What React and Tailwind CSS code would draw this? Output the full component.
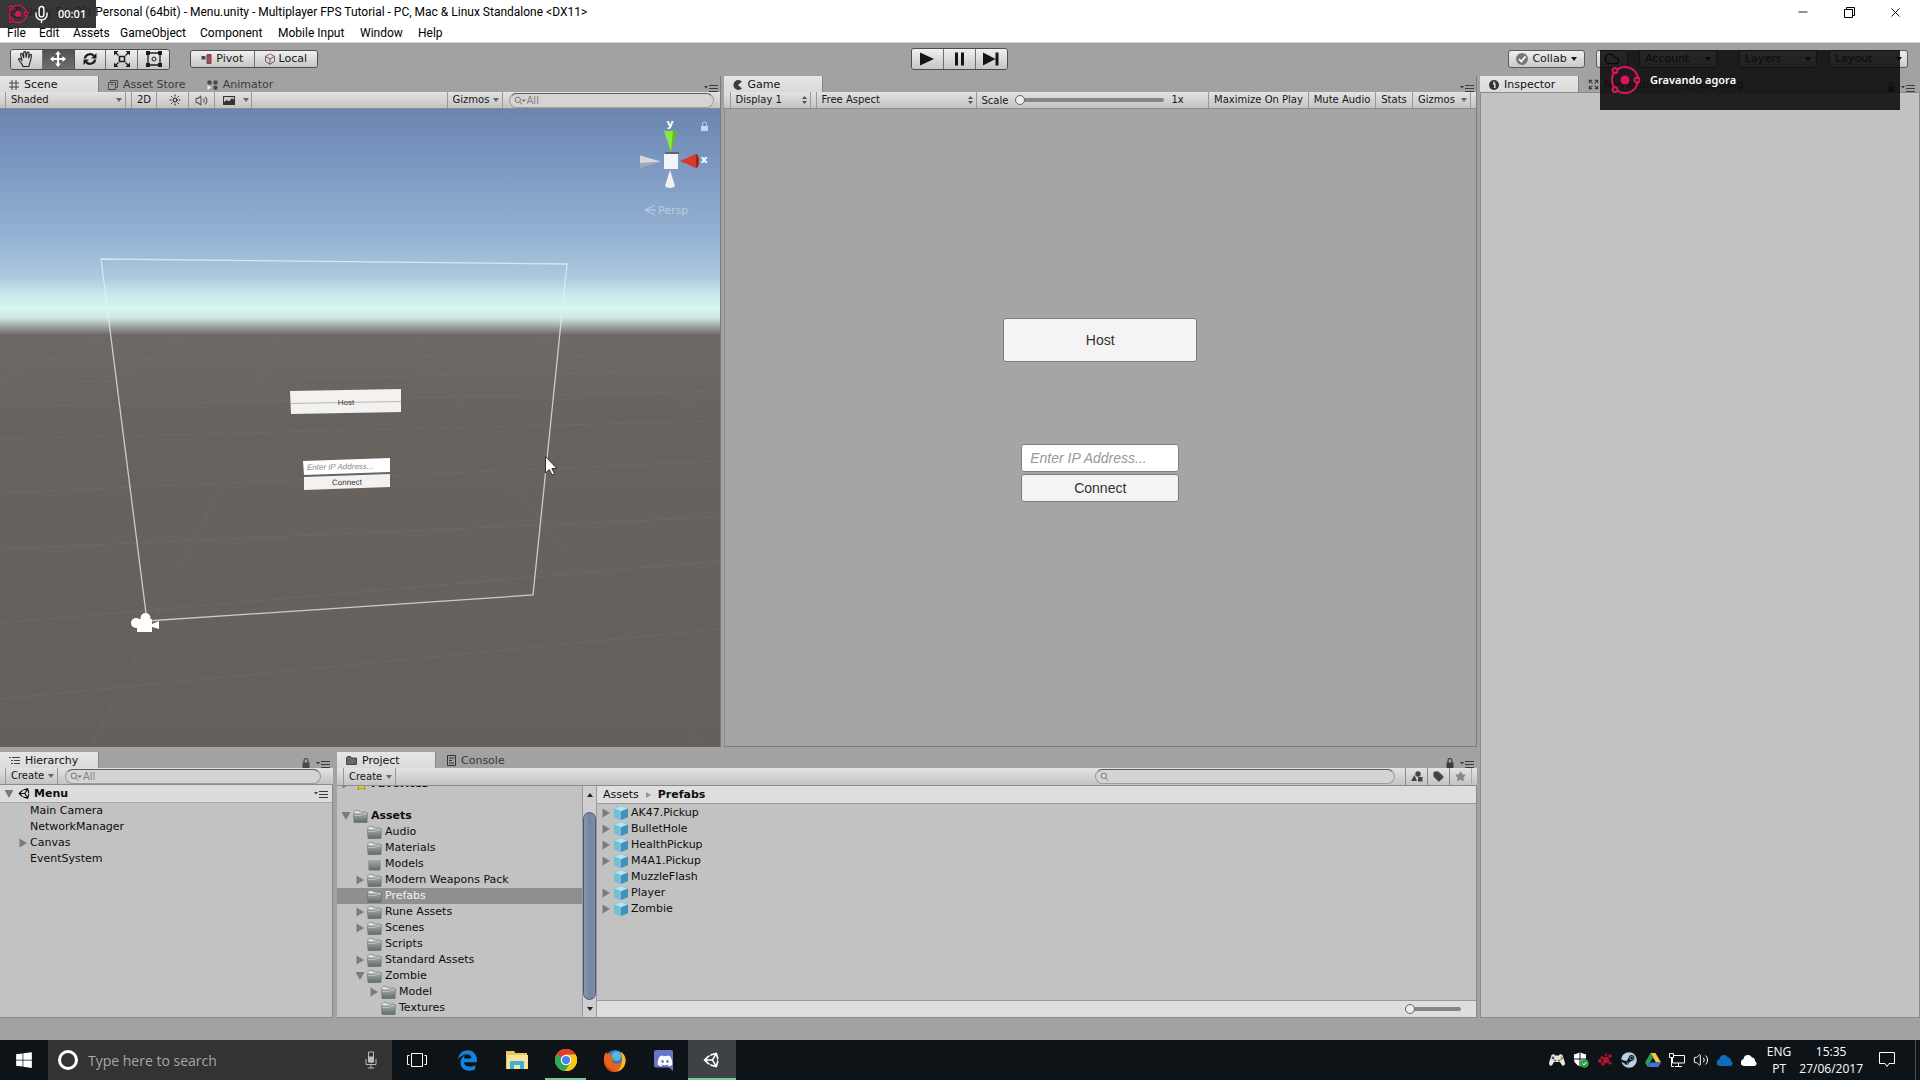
import { useState } from 'react';
import { Mic, Sun, Volume2, Minus, X, Expand, Copy, Tag, Star, Box, Cloud } from 'lucide-react';
import { FaDiscord, FaSteam, FaUnity, FaWindows } from 'react-icons/fa';
import { FaEdgeLegacy } from 'react-icons/fa6';

const MENUS = [
  ['File', 'w-8'],
  ['Edit', 'w-[34px]'],
  ['Assets', 'w-[47px]'],
  ['GameObject', 'w-20'],
  ['Component', 'w-[78px]'],
  ['Mobile Input', 'w-[82px]'],
  ['Window', 'w-[58px]'],
  ['Help', 'w-8'],
];

const SCENE_OBJECTS = [
  { name: 'Main Camera' },
  { name: 'NetworkManager' },
  { name: 'Canvas', fold: true },
  { name: 'EventSystem' },
];

const FOLDERS = [
  { name: 'Audio', depth: 1 },
  { name: 'Materials', depth: 1 },
  { name: 'Models', depth: 1, empty: true },
  { name: 'Modern Weapons Pack', depth: 1, fold: 'closed' },
  { name: 'Prefabs', depth: 1 },
  { name: 'Rune Assets', depth: 1, fold: 'closed' },
  { name: 'Scenes', depth: 1, fold: 'closed' },
  { name: 'Scripts', depth: 1 },
  { name: 'Standard Assets', depth: 1, fold: 'closed' },
  { name: 'Zombie', depth: 1, fold: 'open' },
  { name: 'Model', depth: 2, fold: 'closed' },
  { name: 'Textures', depth: 2 },
];

const PREFABS = [
  { name: 'AK47.Pickup', fold: true },
  { name: 'BulletHole', fold: true },
  { name: 'HealthPickup', fold: true },
  { name: 'M4A1.Pickup', fold: true },
  { name: 'MuzzleFlash' },
  { name: 'Player', fold: true },
  { name: 'Zombie', fold: true },
];

/* ---------- small glyphs ---------- */

function Arrow({ className = '' }) {
  return (
    <svg viewBox="0 0 6 4" className={`h-1 w-1.5 shrink-0 ${className}`} aria-hidden="true">
      <path d="M0 0h6L3 4z" fill="currentColor" />
    </svg>
  );
}

function UpDown({ className = '' }) {
  return (
    <svg viewBox="0 0 5 8" className={`h-2 w-[5px] shrink-0 ${className}`} aria-hidden="true">
      <path d="M0 3h5L2.500 0zM0 5h5L2.500 8z" fill="currentColor" />
    </svg>
  );
}

function Fold({ open, label }) {
  return (
    <button aria-label={`Toggle ${label}`} className="flex h-4 w-3.5 shrink-0 items-center justify-center text-[#7b7b7b]">
      <svg viewBox="0 0 10 10" className="size-2.5">
        {open ? <path d="M0.500 1h9L5 9z" fill="currentColor" /> : <path d="M1.500 0.500v9L9 5z" fill="currentColor" />}
      </svg>
    </button>
  );
}

function PaneMenu() {
  return (
    <button aria-label="Pane options" className="text-[#3c3c3c]">
      <svg viewBox="0 0 14 8" className="h-2 w-3.5">
        <path d="M0 2h4L2 4.500z" fill="currentColor" />
        <path d="M5 1.500h9M5 4.500h9M5 7.500h9" stroke="currentColor" strokeWidth="1" />
      </svg>
    </button>
  );
}

function Lock({ className = '' }) {
  return (
    <svg viewBox="0 0 8 10" className={`h-2.5 w-2 ${className}`} aria-hidden="true">
      <path d="M0.500 4.500h7V10h-7z" fill="currentColor" />
      <path d="M2 5V2.500a2 2 0 0 1 4 0V5" fill="none" stroke="currentColor" strokeWidth="1.200" />
    </svg>
  );
}

function FolderIcon({ empty }) {
  return (
    <svg viewBox="0 0 15 13" className="h-[13px] w-[15px] shrink-0" aria-hidden="true">
      <defs>
        <linearGradient id="folder" x1="0" y1="0" x2="0" y2="1">
          <stop offset="0" stopColor="#a6adad" />
          <stop offset="1" stopColor="#5f6a6b" />
        </linearGradient>
      </defs>
      {!empty && <path d="M1 3V1.500L2 0.500h4l1 1.500h6V4H1z" fill="#dde0e0" stroke="#747d7d" strokeWidth="0.700" />}
      {empty ? (
        <path d="M1 2h13l-.5 9.500-1 1h-10l-1-1z" fill="url(#folder)" />
      ) : (
        <>
          <path d="M0.500 4.500h8L10 3h4.500l-.5 9.500H1z" fill="url(#folder)" stroke="#6a7474" strokeWidth="0.700" />
          <path d="M1 5.200h7.800l1.500-1.500H14" fill="none" stroke="#dfe3e3" strokeWidth="0.700" />
        </>
      )}
    </svg>
  );
}

function PrefabIcon() {
  return (
    <svg viewBox="0 0 14 14" className="size-3.5 shrink-0" aria-hidden="true">
      <path d="M7 0l7 2.500v8.500l-7 3-7-3V2.500z" fill="#4f9dbd" />
      <path d="M7 0l7 2.500-7 3-7-3z" fill="#b3e2f1" />
      <path d="M0 2.500l7 3V14l-7-3z" fill="#74c0db" />
      <path d="M7 5.500l7-3V11l-7 3z" fill="#4391b6" />
    </svg>
  );
}

/* ---------- shared pane pieces ---------- */

function Tab({ active, icon, children }) {
  return (
    <button
      role="tab"
      aria-selected={!!active}
      className={`flex h-4 items-center gap-[5px] whitespace-nowrap pl-[9px] pr-3 pt-px text-[11px] leading-[15px] ${
        active ? 'w-[99px] border-r border-[#868686] bg-linear-to-b from-[#e6e6e6] to-[#dadada] text-[#111]' : 'text-[#3a3a3a]'
      }`}
    >
      {icon}
      {children}
    </button>
  );
}

function ToolRow({ children, className = 'h-[17px] pl-[5px]' }) {
  return (
    <div
      className={`flex shrink-0 items-stretch border-b border-[#8c8c8c] bg-linear-to-b from-[#e3e3e3] to-[#c3c3c3] text-[10px] text-[#161616] ${className}`}
    >
      {children}
    </div>
  );
}

function ToolSelect({ label, value, className = '', updown }) {
  return (
    <div className={`relative flex items-center border-x border-[#999] ${className}`}>
      <select aria-label={label} className="h-full w-full appearance-none bg-transparent pl-[5px] text-[10px] leading-4 outline-none">
        <option>{value}</option>
      </select>
      {updown ? (
        <UpDown className="pointer-events-none absolute right-[3px] text-[#555]" />
      ) : (
        <Arrow className="pointer-events-none absolute right-[3px] text-[#666]" />
      )}
    </div>
  );
}

function SearchBox({ label, placeholder, filter, className = '' }) {
  return (
    <label
      className={`flex h-[15px] items-center self-center rounded-full border border-[#9c9c9c] border-t-[#5c5c5c] bg-[#d4d4d4] pl-1 ${className}`}
    >
      <svg viewBox="0 0 12 9" className="h-[9px] w-3 shrink-0 text-[#777]" aria-hidden="true">
        <circle cx="3.800" cy="3.800" r="2.700" fill="none" stroke="currentColor" />
        <path d="M5.800 5.800L8 8.500" stroke="currentColor" />
        {filter && <path d="M7.500 3.500H12L9.700 6z" fill="currentColor" />}
      </svg>
      <input
        type="text"
        aria-label={label}
        placeholder={placeholder}
        className="h-full w-full bg-transparent pl-px text-[10px] text-[#333] outline-none placeholder:text-[#808080]"
      />
    </label>
  );
}

const groupButton =
  'flex items-center justify-center border-r border-[#6e6e6e] last:border-r-0 bg-linear-to-b from-[#f0f0f0] to-[#c6c6c6]';
const group = 'flex overflow-hidden rounded-[3px] border border-[#4e4e4e]';

/* ---------- window chrome ---------- */

function TitleBar() {
  return (
    <header className="relative h-[43px] shrink-0 border-b border-[#d8d8d8] bg-white font-[Roboto,'Noto_Sans',sans-serif] text-xs text-black">
      <div className="flex h-6 items-center justify-between">
        <h1 className="flex items-center gap-0.5 pl-[7px] font-normal">
          <FaUnity className="size-4" />
          Unity 5.6.2f1 Personal (64bit) - Menu.unity - Multiplayer FPS Tutorial - PC, Mac &amp; Linux Standalone &lt;DX11&gt;
        </h1>
        <div className="flex h-full items-center pr-0.5">
          <button aria-label="Minimize" className="flex w-[46px] justify-center">
            <Minus size={14} strokeWidth={1.5} />
          </button>
          <button aria-label="Restore" className="flex w-[46px] justify-center">
            <svg viewBox="0 0 11 11" className="size-[11px]" fill="none" stroke="currentColor">
              <path d="M0.500 2.500h8v8h-8zM2.500 2.500v-2h8v8h-2" />
            </svg>
          </button>
          <button aria-label="Close" className="flex w-[46px] justify-center">
            <X size={15} strokeWidth={1.5} />
          </button>
        </div>
      </div>
      <nav className="flex h-[18px] items-center pl-[7px]">
        {MENUS.map(([name, width]) => (
          <button key={name} className={`whitespace-nowrap text-left ${width}`}>
            {name}
          </button>
        ))}
      </nav>

      {/* Recorder badge */}
      <div className="absolute left-0 top-0 flex h-7 w-24 items-center bg-[#262626]/92 pl-2 text-white">
        <RecorderLogo className="size-5" />
        <Mic size={19} strokeWidth={1.8} className="ml-1" />
        <span className="ml-[7px] font-['Open_Sans',sans-serif] text-[11px] font-semibold">00:01</span>
      </div>
    </header>
  );
}

function RecorderLogo({ className }) {
  return (
    <svg viewBox="0 0 30 30" className={className} fill="none" stroke="#e0115f" strokeWidth="2" aria-hidden="true">
      <circle cx="15" cy="15" r="13" />
      <circle cx="15" cy="15" r="4.500" fill="#e0115f" stroke="none" />
      <circle cx="27" cy="15" r="2.500" fill="#222" />
      <circle cx="5" cy="5.500" r="2.500" fill="#222" />
      <circle cx="5" cy="24.500" r="2.500" fill="#222" />
    </svg>
  );
}

function HandIcon() {
  return (
    <svg viewBox="0 0 18 18" className="size-[18px]" fill="none" stroke="#222" strokeWidth="1.100" strokeLinejoin="round">
      <path d="M6 16.500C5 13 1.800 10.800 1.500 9.500c0-1.300 1.700-1.200 2.500 0l1 1.200L3.600 4.600c-.2-1.300 1.300-1.700 1.800-.4l1.300 3.500V2.600c.1-1.300 1.900-1.300 2 0l.4 4.700 1-4.500c.4-1.200 2-.8 1.900.5l-.5 4.700 1.400-3c.6-1.100 1.900-.5 1.700.7l-1.400 6.200c-.4 1.700-1.200 2.600-1.300 4.600z" />
    </svg>
  );
}

function MoveIcon() {
  return (
    <svg viewBox="0 0 16 16" className="size-4" fill="#fff">
      <path d="M8 0l3 3.500H9V7h3.500V5L16 8l-3.500 3V9H9v3.500h2L8 16l-3-3.500h2V9H3.500v2L0 8l3.500-3v2H7V3.500H5z" />
    </svg>
  );
}

function RotateIcon() {
  return (
    <svg viewBox="0 0 16 16" className="size-4" fill="none" stroke="#1c1c1c" strokeWidth="2.200">
      <path d="M3 7.500C3 3.500 9 1.500 12 5M13 8.500c0 4-6 6-9 2.500" />
      <path d="M14.500 2v5.500h-5.500zM1.500 14V8.500H7z" fill="#1c1c1c" stroke="none" />
    </svg>
  );
}

function ScaleIcon() {
  return (
    <svg viewBox="0 0 16 16" className="size-4" fill="none" stroke="#1c1c1c" strokeWidth="1.300">
      <path d="M5.500 5.500h5v5h-5z" strokeWidth="1.600" />
      <path d="M4.500 4.500l-3-3M11.500 4.500l3-3M4.500 11.500l-3 3M11.500 11.500l3 3" />
      <path d="M0 0h4.500L0 4.500zM16 0h-4.500L16 4.500zM0 16h4.500L0 11.500zM16 16h-4.500l4.500-4.500z" fill="#1c1c1c" stroke="none" />
    </svg>
  );
}

function RectIcon() {
  return (
    <svg viewBox="0 0 16 16" className="size-4" fill="none" stroke="#1c1c1c">
      <path d="M2 2h12v12H2z" strokeWidth="1.300" />
      <path d="M0 0h4v4H0zM12 0h4v4h-4zM0 12h4v4H0zM12 12h4v4h-4z" fill="#1c1c1c" stroke="none" />
      <circle cx="8" cy="8" r="2" />
    </svg>
  );
}

function MainToolbar() {
  const [tool, setTool] = useState('Move');
  const tools = [
    ['Hand', <HandIcon />],
    ['Move', <MoveIcon />],
    ['Rotate', <RotateIcon />],
    ['Scale', <ScaleIcon />],
    ['Rect', <RectIcon />],
  ];
  const corner = 'flex h-[18px] items-center gap-1 rounded-[3px] border border-[#5a5a5a] bg-linear-to-b from-[#f0f0f0] to-[#c9c9c9]';

  return (
    <div className="grid h-[33px] shrink-0 grid-cols-[1fr_auto_1fr] items-center pb-px pl-2.5 pr-3 text-[11px] text-[#161616]">
      <div className="flex items-center">
        <div className={`h-[21px] w-40 ${group}`}>
          {tools.map(([name, icon]) => (
            <button
              key={name}
              aria-label={`${name} tool`}
              onClick={() => setTool(name)}
              className={
                tool === name
                  ? 'flex flex-1 items-center justify-center border-r border-[#4e4e4e] bg-linear-to-b from-[#525252] to-[#6e6e6e]'
                  : `flex-1 ${groupButton}`
              }
            >
              {icon}
            </button>
          ))}
        </div>
        <div className={`ml-5 h-[18px] w-32 ${group}`}>
          <button className={`flex-1 gap-1 ${groupButton}`}>
            <svg viewBox="0 0 11 10" className="h-2.5 w-[11px]" aria-hidden="true">
              <path d="M0.500 2h4v3.500h-4z" fill="#4b4b4b" />
              <path d="M6 0.500h4v9H6z" fill="#b14955" stroke="#6b4a4e" />
            </svg>
            Pivot
          </button>
          <button className={`flex-1 gap-0.5 ${groupButton}`}>
            <Box size={12} strokeWidth={1.8} className="text-[#6b4a4e]" />
            Local
          </button>
        </div>
      </div>

      <div className={`h-[22px] w-[97px] ${group}`}>
        <button aria-label="Play" className={`flex-1 ${groupButton}`}>
          <svg viewBox="0 0 14 14" className="size-3.5"><path d="M0 0.500v13L14 7z" fill="#151515" /></svg>
        </button>
        <button aria-label="Pause" className={`flex-1 ${groupButton}`}>
          <svg viewBox="0 0 14 14" className="size-3.5"><path d="M3 0.500h3v13H3zM9 0.500h3v13H9z" fill="#151515" /></svg>
        </button>
        <button aria-label="Step" className={`flex-1 ${groupButton}`}>
          <svg viewBox="0 0 16 14" className="h-3.5 w-4"><path d="M0 0.500v13L12.500 7zM12.500 0.500h3v13h-3z" fill="#151515" /></svg>
        </button>
      </div>

      <div className="flex items-center justify-end">
        <button className={`w-[77px] justify-center ${corner}`}>
          <svg viewBox="0 0 12 12" className="size-3" aria-hidden="true">
            <circle cx="6" cy="6" r="6" fill="#777" />
            <path d="M3 6l2.300 2.500L9.500 3.500" fill="none" stroke="#fff" strokeWidth="1.800" />
          </svg>
          Collab
          <Arrow />
        </button>
        <button aria-label="Services" className={`ml-[11px] w-8 justify-center ${corner}`}>
          <Cloud size={16} />
        </button>
        <button className={`ml-[11px] w-[78px] justify-between px-[5px] ${corner}`}>
          Account <Arrow />
        </button>
        <button className={`ml-[22px] w-[78px] justify-between px-[5px] ${corner}`}>
          Layers <Arrow />
        </button>
        <button className={`ml-3 w-[79px] justify-between px-[5px] ${corner}`}>
          Layout <Arrow />
        </button>
      </div>
    </div>
  );
}

/* ---------- scene ---------- */

function SceneView() {
  return (
    <div className="relative flex-1 overflow-hidden bg-[#67625e]">
      <svg viewBox="0 0 720 638" preserveAspectRatio="xMinYMin slice" className="absolute inset-0 h-full w-full">
        <defs>
          <linearGradient id="sky" x1="0" y1="0" x2="0" y2="1">
            <stop offset="0" stopColor="#6b85ae" />
            <stop offset="0.190" stopColor="#7893be" />
            <stop offset="0.560" stopColor="#94b1d2" />
            <stop offset="0.740" stopColor="#abc8dd" />
            <stop offset="0.830" stopColor="#cbebeb" />
            <stop offset="0.880" stopColor="#d7f7f5" />
            <stop offset="0.925" stopColor="#cde6e2" />
            <stop offset="0.965" stopColor="#99a19e" />
            <stop offset="1" stopColor="#6d6967" />
          </linearGradient>
          <linearGradient id="ground" x1="0" y1="0" x2="0" y2="1">
            <stop offset="0" stopColor="#6d6967" />
            <stop offset="0.200" stopColor="#68635f" />
            <stop offset="1" stopColor="#65605c" />
          </linearGradient>
        </defs>
        <rect width="720" height="226" fill="url(#sky)" />
        <rect y="225" width="720" height="414" fill="url(#ground)" />

        {/* Floor grid */}
        <g stroke="#8a8681" strokeOpacity="0.220" fill="none">
          <path d="M0 250L720 246M0 274L720 262M0 298L720 282M0 330L720 312M0 384L720 352M0 440L720 408M0 514L720 452M0 590L720 520" />
          <path d="M275 230L237 345L150 520L90 639M420 230L490 345L640 540L700 639M540 230L720 310M180 230L0 340M100 230L0 270" />
        </g>

        {/* Canvas bounds */}
        <path d="M101 150L567 155L533 486L147 512z" fill="none" stroke="#e9f1ee" strokeOpacity="0.750" strokeWidth="1.300" />

        <path d="M290 282L401 280L401 303L291 305z" fill="#f3f2f1" />
        <path d="M290 294.500L401 292.500" stroke="#a3aaaa" strokeWidth="0.800" />
        <path d="M303 352L390 349L390 363L304 366z" fill="#fff" />
        <path d="M304 368L390 365L390 378L304 381z" fill="#f3f2f1" />
        <g fontFamily="'Liberation Sans', sans-serif" fontSize="8" fill="#333">
          <text x="346" y="296" textAnchor="middle">Host</text>
          <text x="307" y="361" fill="#8b8b8b" fontStyle="italic" transform="rotate(-1 307 361)">Enter IP Address...</text>
          <text x="347" y="376" textAnchor="middle" transform="rotate(-1 347 376)">Connect</text>
        </g>

        {/* Camera gizmo */}
        <g fill="#fff">
          <circle cx="136" cy="514" r="5" />
          <circle cx="145.500" cy="509" r="5" />
          <path d="M137 510h15v5l7-3v8l-7-2v5h-15z" />
        </g>

        {/* Orientation gizmo */}
        <path d="M664 22h13l-6 21z" fill="#86ea3a" />
        <path d="M673 22h4l-6 21z" fill="#5fb824" />
        <path d="M640 46.500l21 6-21 6z" fill="#d5d9dd" />
        <path d="M640 54l21-1.500-21 6z" fill="#a2a8ae" />
        <path d="M670 61l5 16c-2 2.500-8 2.500-10 0z" fill="#eef1f4" />
        <path d="M680 52l16-7c4 1 4 13 0 14z" fill="#d9392b" />
        <path d="M696 45c4 1 4 13 0 14z" fill="#a3231a" />
        <path d="M664 45h14v15h-14z" fill="#f2f5f7" />
        <path d="M664 45l2-2h13v2z" fill="#5a6673" />
        <g fill="#fff" fontFamily="'DejaVu Sans', sans-serif" fontSize="11" fontWeight="bold">
          <text x="670" y="18" textAnchor="middle">y</text>
          <text x="704" y="54" textAnchor="middle">x</text>
        </g>
        <g fill="none" stroke="#dce6f2" strokeOpacity="0.650">
          <path d="M655 96l-10 5 10 5M645 101h11" />
        </g>
        <text x="658" y="105" fill="#dce6f2" fillOpacity="0.600" fontSize="11" fontFamily="'DejaVu Sans', sans-serif">Persp</text>
        <path d="M701 17h7v5h-7z" fill="#dce6f2" fillOpacity="0.800" />
        <path d="M702.500 17v-2a2 2 0 0 1 4 0v2" fill="none" stroke="#dce6f2" strokeOpacity="0.700" />

        {/* Pointer */}
        <path d="M545.500 347.500v16.500l3.800-3.500 2.700 5.500 2.500-1.200-2.600-5.300h5z" fill="#fff" stroke="#222" strokeWidth="0.900" />
      </svg>
    </div>
  );
}

function ScenePane() {
  return (
    <section className="flex min-w-0 flex-[720] flex-col border-r border-[#7c7c7c]">
      <div className="flex h-4 shrink-0 items-end justify-between">
        <div role="tablist" className="flex">
          <Tab
            active
            icon={
              <svg viewBox="0 0 10 10" className="size-2.5" stroke="#444" aria-hidden="true">
                <path d="M3 0v10M7 0v10M0 3h10M0 7h10" />
              </svg>
            }
          >
            Scene
          </Tab>
          <Tab
            icon={
              <svg viewBox="0 0 10 10" className="size-2.5" fill="none" stroke="#4a4a4a" aria-hidden="true">
                <path d="M0.500 2.500h7v7h-7zM2.500 2.500v-2h7v7h-2M2.500 4.500h3" />
              </svg>
            }
          >
            Asset Store
          </Tab>
          <Tab
            icon={
              <svg viewBox="0 0 11 10" className="h-2.5 w-[11px]" fill="#4a4a4a" aria-hidden="true">
                <circle cx="2.500" cy="2.500" r="2.200" />
                <circle cx="8.500" cy="2.500" r="2.200" />
                <circle cx="8.500" cy="7.800" r="2.200" />
                <path d="M0.500 5l4 2.500-4 2.500z" fill="#eee" />
              </svg>
            }
          >
            Animator
          </Tab>
        </div>
        <div className="flex pr-0.5">
          <PaneMenu />
        </div>
      </div>
      <ToolRow>
        <ToolSelect label="Draw mode" value="Shaded" className="w-[121px]" />
        <button className="ml-[5px] w-[26px] border-x border-[#999] leading-4">2D</button>
        <button aria-label="Lighting" className="flex w-8 items-center justify-center border-r border-[#999] pl-1">
          <Sun size={12} />
        </button>
        <button aria-label="Audio" className="flex w-[26px] items-center justify-center border-r border-[#999] text-[#555]">
          <Volume2 size={13} />
        </button>
        <button aria-label="Effects" className="flex w-[37px] items-center gap-2 border-r border-[#999] pl-2">
          <svg viewBox="0 0 12 9" className="h-[9px] w-3" aria-hidden="true">
            <path d="M0 0h12v9H0z" fill="#333" />
            <path d="M1 6l3-2 2 1.500L9 2l2 2V1H1z" fill="#ccc" />
          </svg>
          <Arrow className="text-[#666]" />
        </button>
        <div className="flex-1" />
        <ToolSelect label="Scene gizmos" value="Gizmos" className="w-14" />
        <SearchBox label="Search scene" placeholder="All" filter className="mx-1.5 w-[205px]" />
      </ToolRow>
      <SceneView />
    </section>
  );
}

/* ---------- game ---------- */

function GamePane() {
  const uiButton = 'rounded-[3px] border border-[#7e7e7e] bg-[#f4f4f4] text-sm text-[#323232]';
  return (
    <section className="flex min-w-0 flex-[753] flex-col border-b border-r border-[#7c7c7c]">
      <div className="flex h-4 shrink-0 items-end justify-between">
        <div role="tablist">
          <Tab
            active
            icon={
              <svg viewBox="0 0 10 10" className="size-2.5" aria-hidden="true">
                <path d="M9 1.500A5 5 0 1 0 9 8.500L5 5z" fill="#3c3c3c" />
              </svg>
            }
          >
            Game
          </Tab>
        </div>
        <div className="flex pr-0.5">
          <PaneMenu />
        </div>
      </div>
      <ToolRow className="h-[17px] pl-1.5">
        <ToolSelect label="Display" value="Display 1" updown className="w-[81px]" />
        <ToolSelect label="Aspect" value="Free Aspect" updown className="ml-[5px] w-[161px]" />
        <label className="flex items-center gap-[7px] pl-[5px]">
          Scale
          <Slider label="Scale" className="w-[149px]" />
        </label>
        <span className="ml-[7px] leading-4">1x</span>
        <div className="flex-1" />
        <button className="w-[100px] border-l border-[#999] leading-4">Maximize On Play</button>
        <button className="w-[67px] border-l border-[#999] leading-4">Mute Audio</button>
        <button className="w-[37px] border-l border-[#999] leading-4">Stats</button>
        <button className="flex w-[59px] items-center justify-between border-x border-[#999] pl-[5px] pr-[3px] leading-4">
          Gizmos
          <Arrow className="text-[#666]" />
        </button>
        <div className="w-[5px]" />
      </ToolRow>
      <div className="flex flex-1 flex-col items-center border-l border-[#8c8c8c] bg-[#a5a5a5] pt-[209px] font-['Liberation_Sans',Arial,sans-serif]">
        <button className={`h-11 w-[194px] ${uiButton}`}>Host</button>
        <div className="mt-[82px] flex w-[158px] flex-col gap-0.5">
          <input
            type="text"
            aria-label="IP address"
            placeholder="Enter IP Address..."
            className="h-7 rounded-[3px] border border-[#7e7e7e] bg-white px-2 text-sm placeholder:italic placeholder:text-[#989898]"
          />
          <button className={`h-7 ${uiButton}`}>Connect</button>
        </div>
      </div>
    </section>
  );
}

function Slider({ label, className = '' }) {
  return (
    <input
      type="range"
      aria-label={label}
      defaultValue="0"
      className={`h-3 appearance-none bg-transparent [&::-webkit-slider-runnable-track]:h-1 [&::-webkit-slider-runnable-track]:rounded-full [&::-webkit-slider-runnable-track]:bg-[#858585] [&::-webkit-slider-thumb]:-mt-[3px] [&::-webkit-slider-thumb]:size-2.5 [&::-webkit-slider-thumb]:appearance-none [&::-webkit-slider-thumb]:rounded-full [&::-webkit-slider-thumb]:border [&::-webkit-slider-thumb]:border-[#666] [&::-webkit-slider-thumb]:bg-[#ececec] ${className}`}
    />
  );
}

/* ---------- hierarchy + project ---------- */

function HierarchyPane() {
  return (
    <section className="flex w-[333px] shrink-0 flex-col">
      <div className="flex h-4 shrink-0 items-end justify-between">
        <div role="tablist">
          <Tab
            active
            icon={
              <svg viewBox="0 0 11 9" className="h-[9px] w-[11px]" stroke="#444" aria-hidden="true">
                <path d="M0 1.500h2M3 1.500h8M2 4.500h2M5 4.500h6M2 7.500h2M5 7.500h6" />
              </svg>
            }
          >
            Hierarchy
          </Tab>
        </div>
        <div className="flex items-end gap-1.5 pr-[3px]">
          <Lock className="text-[#4a4a4a]" />
          <PaneMenu />
        </div>
      </div>
      <ToolRow>
        <button className="flex w-[53px] items-center justify-between border-x border-[#999] pl-[5px] pr-[3px] leading-4">
          Create <Arrow className="text-[#666]" />
        </button>
        <SearchBox label="Search hierarchy" placeholder="All" filter className="ml-[7px] mr-3 flex-1" />
      </ToolRow>
      <div className="flex flex-1 flex-col border-b border-r border-[#8a8a8a] bg-[#c2c2c2] text-[11px] leading-4 text-[#0d0d0d]">
        <div className="flex h-[18px] items-center border-b border-[#a8a8a8] bg-[#dcdcdc] pl-0.5 pr-1">
          <Fold open label="Menu" />
          <FaUnity className="ml-0.5 size-[13px]" />
          <span className="ml-[3px] flex-1 font-bold">Menu</span>
          <PaneMenu />
        </div>
        <ul>
          {SCENE_OBJECTS.map((o) => (
            <li key={o.name} className="flex h-4 items-center pl-4">
              {o.fold ? <Fold label={o.name} /> : <span className="w-3.5" />}
              {o.name}
            </li>
          ))}
        </ul>
      </div>
    </section>
  );
}

function FolderTree({ selected, onSelect }) {
  return (
    <div className="flex w-[260px] shrink-0">
      <div className="h-full flex-1 overflow-hidden">
        {/* Scrolled a little past the top */}
        <div className="-mt-[10px]">
          <div className="flex h-4 items-center pl-0.5 font-bold">
            <Fold label="Favorites" />
            <Star size={13} className="ml-0.5 fill-[#e8d635] text-[#a8951d]" />
            <span className="ml-[3px]">Favorites</span>
          </div>
          <div className="mt-4 flex h-4 items-center pl-0.5 font-bold">
            <Fold open label="Assets" />
            <FolderIcon />
            <span className="ml-[3px]">Assets</span>
          </div>
          <ul>
            {FOLDERS.map((f) => (
              <li
                key={f.name}
                onClick={() => onSelect(f.name)}
                className={`flex h-4 items-center ${f.depth === 2 ? 'pl-[30px]' : 'pl-4'} ${
                  f.name === selected ? 'bg-[#8f8f8f] text-[#f2f2f2]' : ''
                }`}
              >
                {f.fold ? <Fold open={f.fold === 'open'} label={f.name} /> : <span className="w-3.5" />}
                <FolderIcon empty={f.empty} />
                <span className="ml-[3px] whitespace-nowrap">{f.name}</span>
              </li>
            ))}
          </ul>
        </div>
      </div>
      {/* Scrollbar */}
      <div className="flex w-[15px] flex-col items-center border-x border-[#9a9a9a] bg-[#cfcfcf] text-[#222]">
        <div className="flex h-[26px] items-start pt-[7px]">
          <Arrow className="rotate-180" />
        </div>
        <div className="w-full flex-1 rounded-full border border-[#4c5a6e] bg-linear-to-r from-[#8698b0] via-[#74869f] to-[#7d8ea5]" />
        <div className="flex h-[17px] items-center">
          <Arrow />
        </div>
      </div>
    </div>
  );
}

function ProjectPane() {
  const [folder, setFolder] = useState('Prefabs');
  const filterButton = 'flex w-[22px] items-center justify-center border-l border-[#8a8a8a]';

  return (
    <section className="flex min-w-0 flex-1 flex-col">
      <div className="flex h-4 shrink-0 items-end justify-between">
        <div role="tablist" className="flex">
          <Tab
            active
            icon={
              <svg viewBox="0 0 11 9" className="h-[9px] w-[11px]" aria-hidden="true">
                <path d="M0.500 1.500l1-1h3l1 1.500h5v6.500h-10z" fill="#686868" stroke="#333" strokeWidth="0.800" />
              </svg>
            }
          >
            Project
          </Tab>
          <Tab
            icon={
              <svg viewBox="0 0 9 11" className="ml-0.5 h-[11px] w-[9px]" fill="none" stroke="#333" aria-hidden="true">
                <path d="M0.500 0.500h8v10h-8zM2 3h5M2 5.500h3M2 8h5" />
              </svg>
            }
          >
            Console
          </Tab>
        </div>
        <div className="flex items-end gap-1.5 pr-[3px]">
          <Lock className="text-[#3c3c3c]" />
          <PaneMenu />
        </div>
      </div>
      <ToolRow className="h-[18px] pl-1.5">
        <button className="flex w-[53px] items-center justify-between border-x border-[#999] pl-[5px] pr-[3px] leading-4">
          Create <Arrow className="text-[#666]" />
        </button>
        <div className="flex-1" />
        <SearchBox label="Search project" className="mr-2.5 w-[300px]" />
        <button aria-label="Search by type" className={filterButton}>
          <svg viewBox="0 0 12 11" className="h-[11px] w-3" fill="#444">
            <circle cx="7" cy="3" r="2.700" />
            <path d="M7 6h4.500v4.500H7zM0 10l3.500-6L6 10z" />
          </svg>
        </button>
        <button aria-label="Search by label" className={filterButton}>
          <Tag size={11} fill="#444" className="text-[#444]" />
        </button>
        <button aria-label="Save search" className={filterButton}>
          <Star size={11} fill="#888" className="text-[#888]" />
        </button>
        <div className="w-1.5 border-l border-[#aaa]" />
      </ToolRow>
      <div className="flex min-h-0 flex-1 border-b border-r border-[#8a8a8a] bg-[#c2c2c2] text-[11px] leading-4 text-[#0d0d0d]">
        <FolderTree selected={folder} onSelect={setFolder} />
        <div className="flex flex-1 flex-col">
          <div className="flex h-[18px] items-center gap-[7px] border-b border-[#989898] bg-[#dedede] pl-1.5">
            <span>Assets</span>
            <svg viewBox="0 0 5 6" className="h-1.5 w-[5px]" aria-hidden="true"><path d="M0 0v6l5-3z" fill="#999" /></svg>
            <span className="font-bold">{folder}</span>
          </div>
          <ul className="flex-1 pt-px">
            {PREFABS.map((p) => (
              <li key={p.name} className="flex h-4 items-center pl-0.5">
                {p.fold ? <Fold label={p.name} /> : <span className="w-3.5" />}
                <span className="ml-px"><PrefabIcon /></span>
                <span className="ml-[3px]">{p.name}</span>
              </li>
            ))}
          </ul>
          <div className="flex h-[17px] items-center justify-end border-t border-[#989898] bg-[#dedede] pr-[15px]">
            <Slider label="Icon size" className="w-14" />
          </div>
        </div>
      </div>
    </section>
  );
}

/* ---------- inspector ---------- */

function InspectorPane() {
  return (
    <section className="flex w-[440px] shrink-0 flex-col">
      <div className="flex h-4 shrink-0 items-end justify-between">
        <div role="tablist" className="flex">
          <Tab
            active
            icon={
              <svg viewBox="0 0 10 10" className="size-2.5" aria-hidden="true">
                <circle cx="5" cy="5" r="5" fill="#333" />
                <path d="M4 4h1.800v4M5 1.500v1.500" stroke="#eee" strokeWidth="1.400" />
              </svg>
            }
          >
            Inspector
          </Tab>
          <Tab icon={<Expand size={11} strokeWidth={2.500} />}>Navigation</Tab>
          <Tab icon={<Copy size={10} />}>Lighting</Tab>
        </div>
        <div className="flex items-end gap-1.5 pr-[5px]">
          <Lock className="text-[#4a4a4a]" />
          <PaneMenu />
        </div>
      </div>
      <div className="flex-1 border border-[#8a8a8a] bg-[#c2c2c2]" />
    </section>
  );
}

/* ---------- taskbar ---------- */

function ChromeIcon() {
  return (
    <svg viewBox="0 0 24 24" className="size-[22px]">
      <circle cx="12" cy="12" r="12" fill="#fbc716" />
      <path d="M12 12L1.600 6a12 12 0 0 1 20.800 0z" fill="#e33b2e" />
      <path d="M12 12L1.600 6A12 12 0 0 0 11 24l6.500-9z" fill="#2da94f" />
      <path d="M12 6h10.400A12 12 0 0 1 11 24l6-9z" fill="#fbc716" />
      <circle cx="12" cy="12" r="5.700" fill="#fff" />
      <circle cx="12" cy="12" r="4.500" fill="#4284f3" />
    </svg>
  );
}

function FirefoxIcon() {
  return (
    <svg viewBox="0 0 24 24" className="size-[23px]">
      <circle cx="12.500" cy="11" r="10" fill="#2a7fc4" />
      <circle cx="14" cy="7.500" r="5" fill="#5ab4e0" />
      <path d="M1 9c0-3 1.500-5 2.500-6 .3 1.200 1 2 1.700 2.500C7 4.800 9 5 10 5.600 8 6.500 8 8 9 9c1.500.6 3 .4 3.500 1-.3 1.500-2.500 1.500-2.500 3 0 2 4 3.500 7.500 1.500 3-2 3-7 1-11.500C22 5 24 9 23.500 13 23 19.500 18 24 12 24 5 24 .5 18 1 9z" fill="#e8641b" />
      <path d="M18.500 3C22 5 24 9 23.500 13c-.4 5-4 9.500-9 10.500 5-3.500 7-12 4-20.500z" fill="#f9b92c" />
      <path d="M1 11c1 6 5 11 12 11-7 3-13-4-12-11z" fill="#c93a20" />
    </svg>
  );
}

function FolderTaskIcon() {
  return (
    <svg viewBox="0 0 22 20" className="h-5 w-[22px]">
      <path d="M0 1h8l1.500 2H21v16H0z" fill="#e9c65a" />
      <path d="M1 5h21v14H1z" fill="#f8e39b" />
      <path d="M4 19v-6.500c0-1 .7-1.500 1.500-1.500h11c.8 0 1.500.5 1.500 1.500V19h-4v-4H8v4z" fill="#3fb0dd" />
    </svg>
  );
}

function Taskbar() {
  const app = 'flex w-[49px] items-center justify-center';
  return (
    <footer className="flex h-10 shrink-0 items-stretch bg-[#0e1317] font-['Open_Sans','Noto_Sans',sans-serif] text-white">
      <button aria-label="Start" className="flex w-12 items-center justify-center">
        <FaWindows className="size-[18px]" />
      </button>
      <label className="flex w-[344px] items-center bg-[#333] pl-2.5 pr-3.5">
        <span className="size-5 shrink-0 rounded-full border-[3px] border-white" />
        <input
          type="text"
          aria-label="Search"
          placeholder="Type here to search"
          className="h-full flex-1 bg-transparent pl-2.5 text-sm outline-none placeholder:text-[#a6a6a6]"
        />
        <svg viewBox="0 0 14 18" className="h-[18px] w-3.5" fill="none" stroke="#bbb" aria-hidden="true">
          <path d="M4.500 1h5v10h-5zM2 8v5.500h10V8M7 14v3M4 17h6" />
          <path d="M5 6h4v5H5z" fill="#bbb" />
        </svg>
      </label>
      <button aria-label="Task view" className={app}>
        <svg viewBox="0 0 20 14" className="h-3.5 w-5" fill="none" stroke="currentColor">
          <path d="M4.500 0.500h11v13h-11zM2.500 2.500h-2v9h2M17.500 2.500h2v9h-2" />
        </svg>
      </button>
      <div className="ml-0.5 flex">
        <button aria-label="Edge" className={app}>
          <FaEdgeLegacy className="size-[21px] text-[#1583dc]" />
        </button>
        <button aria-label="File Explorer" className={app}>
          <FolderTaskIcon />
        </button>
        <button aria-label="Chrome" className="mx-1 flex w-[41px] items-center justify-center border-b-2 border-t-2 border-b-[#7ac59a] border-t-transparent">
          <ChromeIcon />
        </button>
        <button aria-label="Firefox" className={app}>
          <FirefoxIcon />
        </button>
        <button aria-label="Discord" className={app}>
          <svg viewBox="0 0 19 21" className="h-[21px] w-[19px]">
            <path d="M2 0h15a2 2 0 0 1 2 2v19l-4-3.500H2a2 2 0 0 1-2-2V2a2 2 0 0 1 2-2z" fill="#6478c4" />
            <FaDiscord x="3" y="3" width="13" height="12" color="#fff" />
          </svg>
        </button>
        <button aria-label="Unity" className="flex w-12 items-center justify-center border-b-2 border-t-2 border-b-[#7ac59a] border-t-[#3c4245] bg-[#3c4245]">
          <FaUnity className="size-[18px]" />
        </button>
      </div>

      <div className="flex-1" />

      <div className="flex items-center gap-2">
        <svg viewBox="0 0 16 12" className="h-3 w-4" aria-hidden="true">
          <path d="M2.500 1L5 0l1 1.500h4L11 0l2.500 1L16 9c0 3-2.500 3.500-3.500 1.500L11 8H5l-1.500 2.500C2.500 12.500 0 12 0 9z" fill="#e6e6e6" />
          <circle cx="4" cy="4" r="1.400" fill="#555" />
          <circle cx="6.200" cy="6.500" r="1.100" fill="#666" />
          <circle cx="9.800" cy="6.500" r="1.100" fill="#666" />
          <circle cx="12" cy="2.800" r="0.900" fill="#e6b422" />
          <circle cx="13.300" cy="4.200" r="0.900" fill="#d0402c" />
          <circle cx="12" cy="5.400" r="0.900" fill="#3fae49" />
        </svg>
        <svg viewBox="0 0 16 16" className="size-4" aria-hidden="true">
          <path d="M7 0.500l6 2v5c0 3-3 5.500-6 7-3-1.500-6-4-6-7v-5z" fill="#fff" />
          <path d="M7 0.500v14M1 7h12" stroke="#0e1317" />
          <circle cx="11.500" cy="11.500" r="4.300" fill="#27a348" />
          <path d="M9.500 11.500l1.500 1.500 2.500-3" fill="none" stroke="#fff" />
        </svg>
        <svg viewBox="0 0 16 16" className="size-4" fill="#b5122d" aria-hidden="true">
          <circle cx="9" cy="8" r="3.200" />
          <circle cx="3" cy="9" r="2" />
          <circle cx="6" cy="12" r="1.800" />
          <circle cx="13" cy="4" r="1.800" />
          <circle cx="5" cy="5.500" r="1.500" />
          <circle cx="13" cy="11" r="1.600" />
          <circle cx="9" cy="2.800" r="1.200" />
        </svg>
        <FaSteam className="size-4 text-[#b9cfe2]" />
        <svg viewBox="0 0 16 14" className="h-3.5 w-4" aria-hidden="true">
          <path d="M5.500 0h5L16 9.500h-5z" fill="#f6c945" />
          <path d="M5.500 0L8 4.500 2.700 14 0 9.500z" fill="#2a9c55" />
          <path d="M5.500 9.500H16L13.300 14H2.700z" fill="#3f74e0" />
        </svg>
        <svg viewBox="0 0 16 14" className="h-3.5 w-4" fill="none" stroke="#fff" aria-hidden="true">
          <path d="M5 2.500h10.500v7.500H3.500V5M9.500 10v3M6 13.500h7M0.500 0.500h4v4h-4zM2.500 5v8.500H5" />
        </svg>
        <Volume2 size={16} strokeWidth={1.5} />
        <svg viewBox="0 0 16 11" className="h-[11px] w-4" fill="#0f6cbf" aria-hidden="true">
          <path d="M0 7a3 3 0 0 1 2.500-3A4.500 4.500 0 0 1 11 2.500a3.500 3.500 0 0 1 3 3.700A2.500 2.500 0 0 1 13.500 11H3A3 3 0 0 1 0 7z" />
        </svg>
        <svg viewBox="0 0 16 11" className="h-[11px] w-4" fill="#fff" aria-hidden="true">
          <path d="M0 7a3 3 0 0 1 2.500-3A4.500 4.500 0 0 1 11 2.500a3.500 3.500 0 0 1 3 3.700A2.500 2.500 0 0 1 13.500 11H3A3 3 0 0 1 0 7z" />
        </svg>
      </div>
      <button className="ml-2.5 flex flex-col items-center justify-center text-xs leading-[17px]">
        <span>ENG</span>
        <span>PT</span>
      </button>
      <button className="ml-2 flex flex-col items-center justify-center text-xs leading-[17px]">
        <span>15:35</span>
        <span>27/06/2017</span>
      </button>
      <button aria-label="Notifications" className="ml-4 mr-5 flex items-center">
        <svg viewBox="0 0 16 16" className="size-4" fill="none" stroke="currentColor">
          <path d="M0.500 0.500h15v11H10L8 14.500 6 11.500H0.500z" />
        </svg>
      </button>
      <div className="w-[5px] border-l border-[#4a4f52]" />
    </footer>
  );
}

export default function App() {
  return (
    <div className="relative flex h-screen flex-col overflow-hidden bg-[#a2a2a2] font-['DejaVu_Sans',Verdana,sans-serif]">
      <TitleBar />
      <MainToolbar />
      <main className="flex min-h-0 flex-1 gap-[3px]">
        <div className="flex min-w-0 flex-1 flex-col gap-[5px]">
          <div className="flex min-h-0 flex-1 gap-[3px]">
            <ScenePane />
            <GamePane />
          </div>
          <div className="flex h-[266px] shrink-0 gap-1">
            <HierarchyPane />
            <ProjectPane />
          </div>
        </div>
        <InspectorPane />
      </main>
      <div className="h-[22px] shrink-0" />
      <Taskbar />

      {/* Recorder toast */}
      <div role="status" className="absolute right-5 top-[50px] flex h-[60px] w-[300px] items-center bg-[#080808]/87 pl-2.5 text-white">
        <RecorderLogo className="size-[30px]" />
        <span className="ml-2.5 font-['Noto_Sans',sans-serif] text-[11px] font-semibold">Gravando agora</span>
      </div>
    </div>
  );
}
